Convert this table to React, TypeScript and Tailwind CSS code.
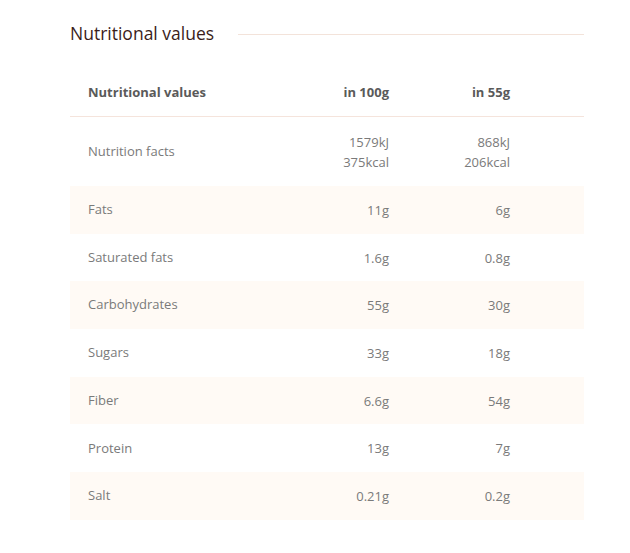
const rows: { label: string; a: string[]; b: string[] }[] = [
  { label: 'Nutrition facts', a: ['1579kJ', '375kcal'], b: ['868kJ', '206kcal'] },
  { label: 'Fats', a: ['11g'], b: ['6g'] },
  { label: 'Saturated fats', a: ['1.6g'], b: ['0.8g'] },
  { label: 'Carbohydrates', a: ['55g'], b: ['30g'] },
  { label: 'Sugars', a: ['33g'], b: ['18g'] },
  { label: 'Fiber', a: ['6.6g'], b: ['54g'] },
  { label: 'Protein', a: ['13g'], b: ['7g'] },
  { label: 'Salt', a: ['0.21g'], b: ['0.2g'] },
];

export default function App() {
  return (
    <div className="w-[630px] h-[553px] bg-white pl-[70px] pr-[46px] pt-[21px] font-['Open_Sans',sans-serif]">
      <div className="flex items-center gap-[24px] h-[24px]">
        <h2 className="text-[17.5px] font-medium text-[#3b1d1a] whitespace-nowrap">Nutritional values</h2>
        <div className="flex-1 h-px mt-[2px] bg-[#f3e3da]" />
      </div>

      <div className="mt-[25px]">
        <div className="flex items-center h-[47px] border-b border-[#f5e4dc] pl-[18px] pr-[74px] text-[13px] font-bold text-[#5a5a5a]">
          <div className="flex-1">Nutritional values</div>
          <div className="w-[120px] text-right">in 100g</div>
          <div className="w-[121px] text-right">in 55g</div>
        </div>

        {rows.map((r, i) => (
          <div
            key={r.label}
            className={`flex items-center pl-[18px] pr-[74px] text-[13px] text-[#7a7a7a] ${
              i === 0 ? 'h-[69px]' : 'h-[47.7px]'
            } ${i % 2 === 1 ? 'bg-[#fffaf5]' : ''}`}
          >
            <div className="flex-1">{r.label}</div>
            <div className="w-[120px] text-right leading-[20px]">
              {r.a.map((v) => (
                <div key={v}>{v}</div>
              ))}
            </div>
            <div className="w-[121px] text-right leading-[20px]">
              {r.b.map((v) => (
                <div key={v}>{v}</div>
              ))}
            </div>
          </div>
        ))}
      </div>
    </div>
  );
}
